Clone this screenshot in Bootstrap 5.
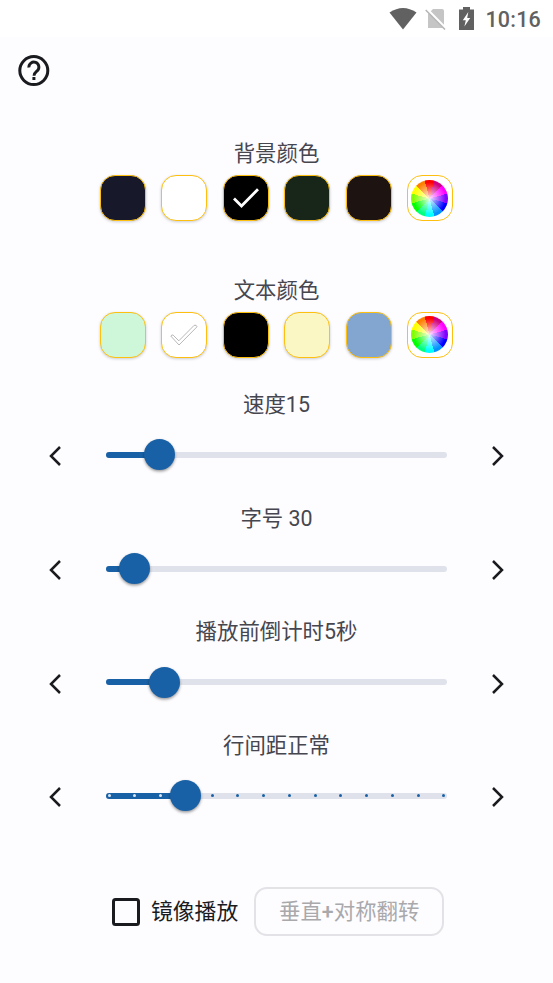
<!DOCTYPE html>
<html lang="zh-CN">
<head>
  <meta charset="UTF-8" />
  <meta name="viewport" content="width=device-width, initial-scale=1.0"/>
  <title>播放设置</title>
  <link href="https://cdn.jsdelivr.net/npm/bootstrap@5.3.0/dist/css/bootstrap.min.css" rel="stylesheet">
  <style>
    body {
      font-family: Roboto, "Noto Sans CJK SC", sans-serif;
      background: #fdfcff;
      color: #46464f;
      height: 983px;
      overflow: hidden;
    }
    svg { display: block; }
    .status-bar {
      height: 37px;
      padding-right: 12px;
      background: #fff;
      color: #616161;
    }
    .clock {
      font-size: 21.5px;
      font-weight: 500;
      line-height: 36px;
      padding-top: 2px;
      letter-spacing: .2px;
      margin-left: 11px;
    }
    .battery { margin-left: 12px; }
    .top-tools { height: 103px; padding: 18px 0 0 18px; }
    .setting-title {
      font-size: 21.4px;
      line-height: 28px;
      height: 28px;
      text-align: center;
      white-space: nowrap;
    }
    .color-group { height: 136.7px; }
    .swatches { gap: 15.4px; margin-top: 7px; }
    .swatch {
      width: 46px;
      height: 46px;
      padding: 0;
      border: 1.3px solid #fdc010;
      border-radius: 15px;
      box-shadow: 0 1px 3px rgba(0, 0, 0, .2);
    }
    .swatch-plain { box-shadow: none; }
    .wheel {
      width: 37px;
      height: 37px;
      border-radius: 50%;
      background:
        radial-gradient(circle, rgba(255,255,255,.9) 0, rgba(255,255,255,.6) 20%, rgba(255,255,255,.3) 40%, rgba(255,255,255,0) 62%),
        conic-gradient(from -15deg,
          #ff0000 0 30deg, #d00080 0 60deg, #ff00ff 0 90deg, #8000ff 0 120deg,
          #0000ff 0 150deg, #0090ff 0 180deg, #00ffff 0 210deg, #00ff80 0 240deg,
          #00ff00 0 270deg, #80ff00 0 300deg, #ffff00 0 330deg, #ff8000 0);
    }
    .slider-list { margin-top: -22.4px; }
    .slider-group { height: 113.65px; }
    .slider-row { height: 32px; margin-top: 20px; padding: 0 49px; }
    .step-btn { width: 12px; padding: 3px 0 0; border: 0; background: none; }
    .track {
      position: relative;
      width: 341px;
      height: 6px;
      border-radius: 3px;
      background: #dfe2eb;
    }
    .track-fill { height: 6px; border-radius: 3px; background: #1961a6; }
    .thumb {
      position: absolute;
      top: -12.5px;
      width: 31px;
      height: 31px;
      margin-left: -15.5px;
      border-radius: 50%;
      background: #1961a6;
      box-shadow: 0 1.5px 3px rgba(0, 0, 0, .4);
    }
    .ticks { position: absolute; inset: 0; padding: 0 1.5px; }
    .tick { width: 3px; height: 3px; border-radius: 50%; background: #1961a6; }
    .tick-on { background: #dbe6f5; }
    .mirror-row { margin-top: 41.4px; height: 50px; padding-left: 112px; color: #1a1b1f; }
    .check-box {
      width: 28px;
      height: 28px;
      border: 3px solid #1a1b1f;
      border-radius: 3.5px;
    }
    .mirror-label { font-size: 21.8px; margin: 0 16px 0 11px; line-height: 28px; }
    .flip-btn {
      width: 190px;
      height: 49px;
      padding: 0;
      border: 2px solid #e3e2e6;
      border-radius: 13px;
      background: transparent;
      font-size: 21.4px;
      font-weight: 500;
    }
    .flip-btn:disabled { opacity: 1; color: #a9a9ac; border-color: #e3e2e6; }
    .flip-text { font-weight: 400; }
  </style>
</head>
<body>

  <div class="status-bar d-flex align-items-center justify-content-end">
    <svg width="28" height="22" viewBox="0 0 28 22"><path d="M0.5 4.5Q14-4.5 27.5 4.5L14 21.5Z" fill="#616161"/></svg>
    <svg class="ms-2" width="22" height="22" viewBox="0 0 22 22">
      <path d="M8 1H17Q19 1 19 3V20H3V6Z" fill="#c5c5c5"/>
      <path d="M1.8 1.2L21.2 21.2" stroke="#fff" stroke-width="3"/>
      <path d="M.7 2L20 21.5" stroke="#b5b5b5" stroke-width="1.5"/>
    </svg>
    <svg class="battery" width="15" height="23" viewBox="0 0 15 23">
      <path d="M0 2.5H4V0H11V2.5H15V23H0Z" fill="#616161"/>
      <path d="M9.3 5L3.8 13.3H6.8L5.4 19.5L11.2 11H8.2Z" fill="#fff"/>
    </svg>
    <span class="clock">10:16</span>
  </div>

  <div class="top-tools">
    <svg width="32" height="32" viewBox="0 0 32 32" fill="none" stroke="#1a1b1f">
      <circle cx="15.8" cy="15.6" r="14" stroke-width="3"/>
      <path d="M10.9 12.5A5 5 0 1 1 19.2 15.8C17.4 17.4 16 18.2 16 20.8" stroke-width="2.9"/>
      <path d="M14.4 22H17.4V25H14.4Z" fill="#1a1b1f" stroke="none"/>
    </svg>
  </div>

  <div id="colorGroups"></div>
  <div id="sliderGroups" class="slider-list"></div>

  <div class="mirror-row d-flex align-items-center">
    <div class="check-box"></div>
    <span class="mirror-label">镜像播放</span>
    <button class="btn flip-btn" disabled><span class="flip-text">垂直</span>+<span class="flip-text">对称翻转</span></button>
  </div>

  <script src="https://cdn.jsdelivr.net/npm/bootstrap@5.3.0/dist/js/bootstrap.bundle.min.js"></script>
  <script>
    const colorGroups = [
      { title: '背景颜色', colors: ['#18182b', '#ffffff', '#000000', '#182519', '#1d1311'], checked: 2 },
      { title: '文本颜色', colors: ['#cef6d8', '#ffffff', '#000000', '#faf7c5', '#83a6d0'], checked: 1 }
    ];

    // value is the thumb position in percent of the track
    const sliders = [
      { title: '速度15', value: 15.6 },
      { title: '字号 30', value: 8.5 },
      { title: '播放前倒计时5秒', value: 17.3 },
      { title: '行间距正常', value: 23.4, ticks: 14, step: 3 }
    ];

    const whiteCheck = '<svg width="28" height="22" viewBox="0 0 28 22"><path d="M2 11.5L9.5 19L26 2.2" fill="none" stroke="#fff" stroke-width="2.8"/></svg>';
    const outlineCheck = '<svg width="28" height="22" viewBox="0 0 28 22"><path d="M.8 12Q2 10.3 3.2 11.2L8.8 16.8L24.2 1.3Q26.5.5 27 2.8L9 21Z" fill="#fff" stroke="#888" stroke-width=".6"/></svg>';

    function renderColorGroup(g) {
      const items = g.colors.map((c, i) => {
        const mark = i === g.checked ? (c === '#ffffff' ? outlineCheck : whiteCheck) : '';
        return `<button class="swatch d-flex align-items-center justify-content-center" style="background: ${c}">${mark}</button>`;
      }).join('');
      return `<div class="color-group">
        <div class="setting-title">${g.title}</div>
        <div class="swatches d-flex justify-content-center">
          ${items}
          <button class="swatch swatch-plain bg-white d-flex align-items-center justify-content-center"><span class="wheel"></span></button>
        </div>
      </div>`;
    }

    function renderSlider(s) {
      let ticks = '';
      if (s.ticks) {
        for (let i = 0; i < s.ticks; i++) {
          ticks += `<span class="tick ${i < s.step ? 'tick-on' : ''}"></span>`;
        }
        ticks = `<div class="ticks d-flex align-items-center justify-content-between">${ticks}</div>`;
      }
      return `<div class="slider-group">
        <div class="setting-title">${s.title}</div>
        <div class="slider-row d-flex align-items-center justify-content-between">
          <button class="step-btn"><svg width="12" height="20" viewBox="0 0 12 20"><path d="M11 1L2 10L11 19" fill="none" stroke="#1a1b1f" stroke-width="2.5"/></svg></button>
          <div class="track">
            <div class="track-fill" style="width: ${s.value}%"></div>
            ${ticks}
            <div class="thumb" style="left: ${s.value}%"></div>
          </div>
          <button class="step-btn"><svg width="12" height="20" viewBox="0 0 12 20"><path d="M1 1L10 10L1 19" fill="none" stroke="#1a1b1f" stroke-width="2.5"/></svg></button>
        </div>
      </div>`;
    }

    document.getElementById('colorGroups').innerHTML = colorGroups.map(renderColorGroup).join('');
    document.getElementById('sliderGroups').innerHTML = sliders.map(renderSlider).join('');
  </script>
</body>
</html>
